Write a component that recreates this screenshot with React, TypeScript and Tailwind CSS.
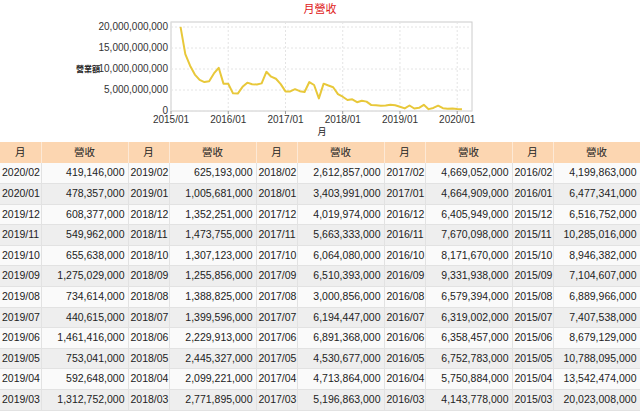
const cols: [string, number][][] = [];
const v = [
  [419146000, 478357000, 608377000, 549962000, 655638000, 1275029000, 734614000, 440615000, 1461416000, 753041000, 592648000, 1312752000],
  [625193000, 1005681000, 1352251000, 1473755000, 1307123000, 1255856000, 1388825000, 1399596000, 2229913000, 2445327000, 2099221000, 2771895000],
  [2612857000, 3403991000, 4019974000, 5663333000, 6064080000, 6510393000, 3000856000, 6194447000, 6891368000, 4530677000, 4713864000, 5196863000],
  [4669052000, 4664909000, 6405949000, 7670098000, 8171670000, 9331938000, 6579394000, 6319002000, 6358457000, 6752783000, 5750884000, 4143778000],
  [4199863000, 6477341000, 6516752000, 10285016000, 8946382000, 7104607000, 6889966000, 7407538000, 8679129000, 10788095000, 13542474000, 20023008000],
];
// month index: 2020/02 = 61 months after 2015/01
v.forEach((col, c) => {
  cols.push(
    col.map((n, r) => {
      const idx = 61 - c * 12 - r;
      const y = 2015 + Math.floor(idx / 12);
      const m = (idx % 12) + 1;
      return [`${y}/${String(m).padStart(2, "0")}`, n];
    })
  );
});

const points = cols
  .flat()
  .map(([lbl, n]) => {
    const [y, m] = lbl.split("/").map(Number);
    const idx = (y - 2015) * 12 + (m - 1);
    return [171 + idx * 4.77, 111 - (n / 1e9) * 4.2] as [number, number];
  })
  .sort((a, b) => a[0] - b[0])
  .map((p) => p.join(","))
  .join(" ");

const yTicks = [0, 5, 10, 15, 20];
const xTicks = ["2015/01", "2016/01", "2017/01", "2018/01", "2019/01", "2020/01"];

function Chart() {
  return (
    <svg width={640} height={140} className="block" style={{ fontFamily: "'Liberation Sans', sans-serif" }}>
      <rect x={171} y={22} width={301} height={89} fill="white" stroke="#ccc" />
      {yTicks.map((t) => {
        const y = 111 - t * 4.2;
        return (
          <g key={t}>
            <line x1={171} x2={472} y1={y} y2={y} stroke="#e4e4e4" strokeDasharray="2 2" />
            <text x={168} y={y + 3} fontSize={10} textAnchor="end" fill="#333">
              {t === 0 ? "0" : `${t},000,000,000`}
            </text>
          </g>
        );
      })}
      {xTicks.map((t, i) => {
        const x = 171 + i * 12 * 4.77;
        return (
          <g key={t}>
            <line x1={x} x2={x} y1={22} y2={111} stroke="#e4e4e4" strokeDasharray="2 2" />
            <line x1={x} x2={x} y1={111} y2={114} stroke="#999" />
            <text x={x} y={123} fontSize={10} textAnchor="middle" fill="#333">{t}</text>
          </g>
        );
      })}
      <text x={76} y={72} fontSize={8} fontWeight="bold" fill="#222" style={{ fontFamily: "'Noto Sans CJK TC', sans-serif" }}>營業額</text>
      <text x={322} y={135} fontSize={9} textAnchor="middle" fill="#222" style={{ fontFamily: "'Noto Sans CJK TC', sans-serif" }}>月</text>
      <polyline points={points} fill="none" stroke="#e8c83a" strokeWidth={2} strokeLinejoin="round" />
    </svg>
  );
}

export default function App() {
  return (
    <div className="w-[640px] h-[413px] overflow-hidden bg-white text-[10.5px] text-[#222]" style={{ fontFamily: "'Liberation Sans', 'Noto Sans CJK TC', sans-serif" }}>
      <div className="relative h-[142px]">
        <div className="absolute top-0 left-0 w-full text-center text-[11px] leading-[18px] text-[#e02020]">月營收</div>
        <Chart />
      </div>
      <table className="w-[640px] table-fixed border-collapse">
        <colgroup>
          {cols.map((_, i) => [<col key={`a${i}`} className="w-[41px]" />, <col key={`b${i}`} className="w-[87px]" />])}
        </colgroup>
        <thead>
          <tr className="h-[21px] bg-[#fcd6b1]">
            {cols.map((_, i) => [
              <th key={`a${i}`} className="font-normal text-center border-r border-[#fde9d6]">月</th>,
              <th key={`b${i}`} className="font-normal text-center border-r border-[#fde9d6]">營收</th>,
            ])}
          </tr>
        </thead>
        <tbody>
          {cols[0].map((_, r) => (
            <tr key={r} className={`h-[20.6px] border-b border-[#e2e2e2] ${r % 2 ? "bg-[#eeeeee]" : "bg-[#fafafa]"}`}>
              {cols.map((col, c) => [
                <td key={`a${c}`} className="px-[2px] whitespace-nowrap border-r border-[#e2e2e2]">{col[r][0]}</td>,
                <td key={`b${c}`} className="px-[3px] whitespace-nowrap text-right border-r border-[#e2e2e2]">{col[r][1].toLocaleString("en-US")}</td>,
              ])}
            </tr>
          ))}
        </tbody>
      </table>
    </div>
  );
}
